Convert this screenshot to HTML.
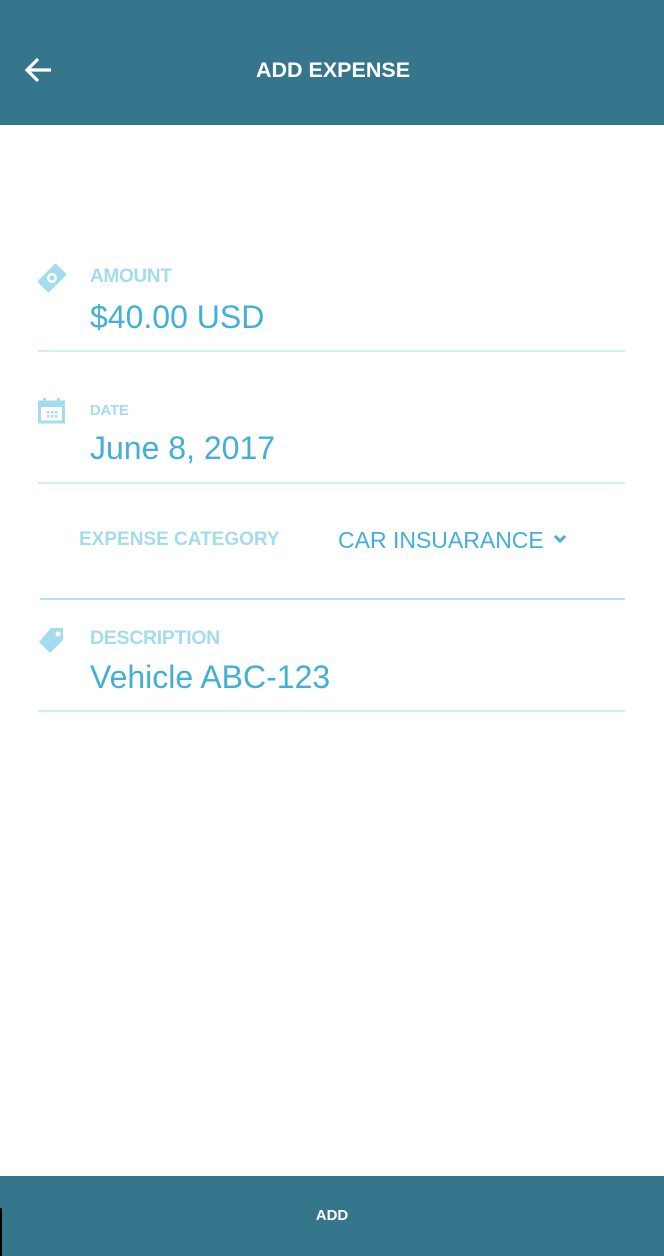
<!DOCTYPE html>
<html><head><meta charset="utf-8"><style>
body{margin:0;width:664px;height:1256px;position:relative;background:#fff;font-family:"Liberation Sans",sans-serif;overflow:hidden}
.hdr{position:absolute;left:0;top:0;width:664px;height:125px;background:#35768c}
.title{position:absolute;top:58px;left:0;width:666px;text-align:center;color:#fff;font-weight:bold;font-size:21.5px}
.lbl{position:absolute;color:#a3dcee;font-weight:bold}
.val{position:absolute;color:#43afd7;font-size:32px}
.line{position:absolute;left:38px;width:587px;height:2px;background:#d2eef8}
.bot{position:absolute;left:0;top:1176px;width:664px;height:80px;background:#35768c;color:#fff;font-weight:bold;font-size:15px;text-align:center;line-height:80px}
</style></head><body>
<div class="hdr">
<svg style="position:absolute;left:24px;top:56px" width="30" height="28" viewBox="0 0 30 28"><path d="M27 14H4M14 3L3 14l11 11" stroke="#fff" stroke-width="3.2" fill="none"/></svg>
<div class="title">ADD EXPENSE</div></div>

<svg style="position:absolute;left:36px;top:262px" width="32" height="32" viewBox="0 0 32 32"><g transform="rotate(-45 16 16)"><rect x="3" y="8" width="26" height="16" rx="2" fill="#a3dcee"/><circle cx="16" cy="16" r="5" fill="#fff"/><circle cx="16" cy="16" r="2.5" fill="#a3dcee"/></g></svg>
<div class="lbl" style="left:90px;top:266px;font-size:19px;letter-spacing:-0.3px">AMOUNT</div>
<div class="val" style="left:90px;top:299px">$40.00 USD</div>
<div class="line" style="top:350px"></div>

<svg style="position:absolute;left:38px;top:398px" width="27" height="26" viewBox="0 0 27 26"><rect x="1.5" y="4" width="24" height="20" fill="none" stroke="#a3dcee" stroke-width="3"/><rect x="1.5" y="4" width="24" height="5" fill="#a3dcee"/><rect x="5" y="0" width="3" height="5" fill="#a3dcee"/><rect x="19" y="0" width="3" height="5" fill="#a3dcee"/><g fill="#a3dcee"><rect x="9" y="13" width="2.5" height="2.5"/><rect x="13" y="13" width="2.5" height="2.5"/><rect x="17" y="13" width="2.5" height="2.5"/><rect x="9" y="17" width="2.5" height="2.5"/><rect x="13" y="17" width="2.5" height="2.5"/><rect x="17" y="17" width="2.5" height="2.5"/></g></svg>
<div class="lbl" style="left:90px;top:402px;font-size:15px;letter-spacing:-0.3px">DATE</div>
<div class="val" style="left:90px;top:430px">June 8, 2017</div>
<div class="line" style="top:482px"></div>

<div class="lbl" style="left:79px;top:529px;font-size:19px">EXPENSE CATEGORY</div>
<div style="position:absolute;left:338px;top:527px;color:#43afd7;font-size:23px">CAR INSUARANCE</div>
<svg style="position:absolute;left:552px;top:533px" width="16" height="12" viewBox="0 0 16 12"><path d="M3 3l5 5 5-5" stroke="#43afd7" stroke-width="3" fill="none"/></svg>
<div class="line" style="top:598px;left:40px;width:585px;background:#b4e3f3"></div>

<svg style="position:absolute;left:37px;top:625px" width="30" height="30" viewBox="0 0 30 30"><path d="M14 3h12v12L13 28 2 17z" fill="#a3dcee"/><circle cx="21" cy="9" r="2.5" fill="#fff"/></svg>
<div class="lbl" style="left:90px;top:627px;font-size:19.5px;letter-spacing:-0.3px">DESCRIPTION</div>
<div class="val" style="left:90px;top:659px">Vehicle ABC-123</div>
<div class="line" style="top:710px"></div>

<div class="bot">ADD</div>
<div style="position:absolute;left:0;top:1208px;width:2px;height:48px;background:#000"></div>
</body></html>
